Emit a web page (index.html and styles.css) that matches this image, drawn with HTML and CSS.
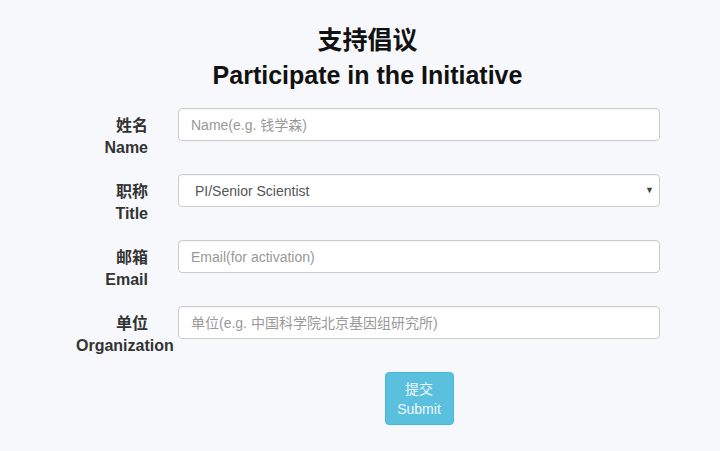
FILE: index.html
```html
<!DOCTYPE html>
<html>
<head>
<meta charset="utf-8">
<link rel="stylesheet" href="styles.css">
</head>
<body>
<div class="page">
  <h1 class="title">支持倡议<br>Participate in the Initiative</h1>
  <form class="form">
    <div class="row">
      <label class="label">姓名<br>Name</label>
      <div class="field"><input class="input" placeholder="Name(e.g. 钱学森)"></div>
    </div>
    <div class="row">
      <label class="label">职称<br>Title</label>
      <div class="field">
        <div class="input select">PI/Senior Scientist</div>
        <span class="arrow">▼</span>
      </div>
    </div>
    <div class="row">
      <label class="label">邮箱<br>Email</label>
      <div class="field"><input class="input" placeholder="Email(for activation)"></div>
    </div>
    <div class="row">
      <label class="label">单位<br>Organization</label>
      <div class="field"><input class="input" placeholder="单位(e.g. 中国科学院北京基因组研究所)"></div>
    </div>
    <div class="actions">
      <button type="button" class="btn">提交<br>Submit</button>
    </div>
  </form>
</div>
</body>
</html>
```
FILE: styles.css
```css
html, body {
  margin: 0;
  padding: 0;
  background: #f7f8fb;
  font-family: "Liberation Sans", Arial, "Noto Sans CJK SC", sans-serif;
}
.page {
  width: 720px;
  height: 451px;
  overflow: hidden;
}
.title {
  margin: 0;
  padding: 23px 0 0 15px;
  text-align: center;
  font-size: 25px;
  font-weight: bold;
  line-height: 35px;
  color: #111;
}
.form {
  margin-top: 15px;
  padding-left: 76px;
}
.row {
  display: flex;
  align-items: flex-start;
  height: 33px;
  margin-bottom: 33px;
}
.label {
  width: 72px;
  flex: none;
  text-align: right;
  font-size: 16px;
  font-weight: bold;
  line-height: 22px;
  color: #333;
  padding-top: 7px;
  white-space: nowrap;
}
.field {
  margin-left: 30px;
  width: 482px;
  position: relative;
}
.input {
  box-sizing: border-box;
  width: 482px;
  height: 33px;
  border: 1px solid #ccc;
  border-radius: 4px;
  background: #fff;
  padding: 0 12px;
  font-family: inherit;
  font-size: 14px;
  color: #555;
  outline: none;
  box-shadow: inset 0 1px 1px rgba(0,0,0,0.04);
}
.input::placeholder {
  color: #999;
}
.select {
  display: flex;
  align-items: center;
  padding-left: 16px;
}
.arrow {
  position: absolute;
  right: 6px;
  top: 11px;
  font-size: 9px;
  color: #444;
}
.actions {
  display: flex;
  justify-content: center;
  margin-left: 102px;
  width: 482px;
}
.btn {
  width: 69px;
  height: 53px;
  border: 1px solid #46b8da;
  border-radius: 4px;
  background: #5bc0de;
  color: #eef8fc;
  font-family: inherit;
  font-size: 14px;
  line-height: 20px;
  padding: 0;
}
```
